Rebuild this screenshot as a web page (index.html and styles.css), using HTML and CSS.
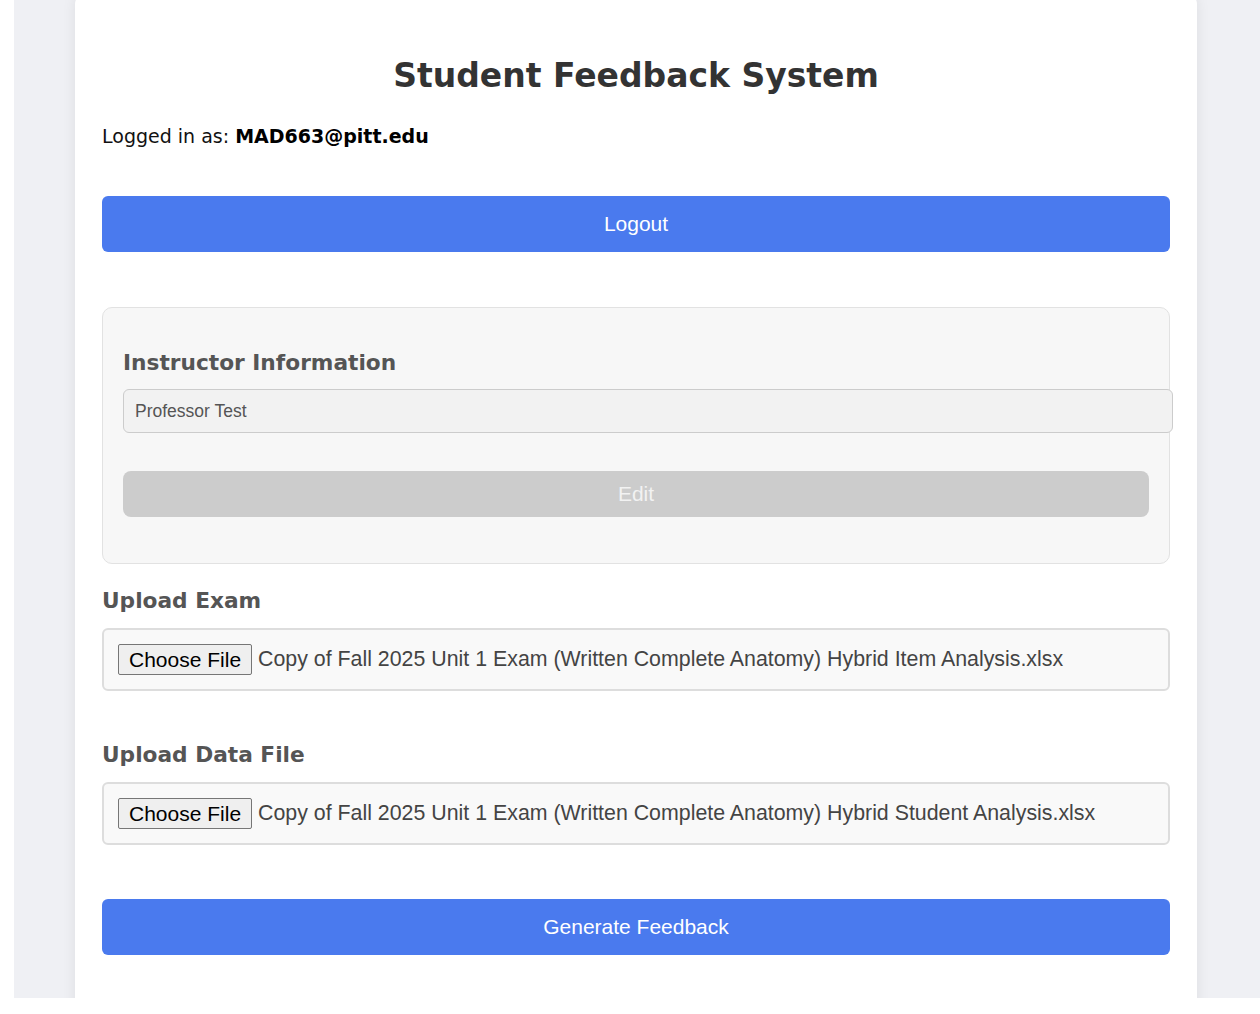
FILE: index.html
```html
<!DOCTYPE html>
<html lang="en">
<head>
  <meta charset="UTF-8">
  <title>Student Feedback System</title>
  <link rel="stylesheet" href="styles.css">
</head>
<body>
  <div class="page">
    <div class="card">
      <h1>Student Feedback System</h1>
      <p class="user">Logged in as: <strong>MAD663@pitt.edu</strong></p>

      <button class="btn-primary btn-logout">Logout</button>

      <div class="instructor-box">
        <h3>Instructor Information</h3>
        <input type="text" class="instructor-input" value="Professor Test" readonly>
        <button class="btn-edit" disabled>Edit</button>
      </div>

      <h3 class="upload-title">Upload Exam</h3>
      <div class="file-field">
        <span class="file-btn">Choose File</span>
        <span class="file-name">Copy of Fall 2025 Unit 1 Exam (Written Complete Anatomy) Hybrid Item Analysis.xlsx</span>
      </div>

      <h3 class="upload-title upload-data">Upload Data File</h3>
      <div class="file-field">
        <span class="file-btn">Choose File</span>
        <span class="file-name">Copy of Fall 2025 Unit 1 Exam (Written Complete Anatomy) Hybrid Student Analysis.xlsx</span>
      </div>

      <button class="btn-primary btn-generate">Generate Feedback</button>
    </div>
  </div>
</body>
</html>
```

FILE: styles.css
```css
body {
  margin: 0;
  background: #fff;
  font-family: "DejaVu Sans", Verdana, sans-serif;
}
.page {
  margin-left: 14px;
  padding-left: 61px;
  height: 998px;
  background: #eff0f4;
  overflow: hidden;
  display: flex;
  align-items: flex-start;
}
.card {
  width: 1122px;
  flex-shrink: 0;
  box-sizing: border-box;
  margin-top: -6px;
  padding: 0 27px 80px;
  background: #fff;
  border-radius: 10px;
  box-shadow: 0 0 14px rgba(0,0,0,0.08);
}
h1 {
  margin: 62px 0 0;
  font-size: 33px;
  line-height: 40px;
  text-align: center;
  color: #333;
}
.user {
  margin: 28px 0 0;
  font-size: 19px;
  line-height: 24px;
  color: #111;
}
.user strong {
  color: #000;
}
.btn-primary {
  display: block;
  width: 100%;
  height: 56px;
  border: none;
  border-radius: 6px;
  background: #4a7aee;
  color: #fff;
  font-family: "Liberation Sans", Arial, sans-serif;
  font-size: 21px;
  cursor: pointer;
}
.btn-logout {
  margin-top: 48px;
}
.instructor-box {
  margin-top: 55px;
  padding: 20px;
  background: #f7f7f7;
  border: 1px solid #e2e2e2;
  border-radius: 10px;
}
h3 {
  margin: 0;
  font-size: 21.7px;
  line-height: 26px;
  color: #555;
}
.instructor-box h3 {
  margin-top: 22px;
}
.instructor-input {
  display: block;
  width: 100%;
  height: 42px;
  margin-top: 13px;
  padding: 0 11px;
  border: 1px solid #ccc;
  border-radius: 6px;
  background: #f2f2f2;
  color: #555;
  font-family: "Liberation Sans", Arial, sans-serif;
  font-size: 17.5px;
  outline: none;
}
.btn-edit {
  display: block;
  width: 100%;
  height: 46px;
  margin: 38px 0 26px;
  border: none;
  border-radius: 8px;
  background: #ccc;
  color: #f2f2f2;
  font-family: "Liberation Sans", Arial, sans-serif;
  font-size: 21px;
}
.upload-title {
  margin-top: 24px;
}
.upload-data {
  margin-top: 51px;
}
.file-field {
  display: flex;
  align-items: center;
  gap: 6px;
  margin-top: 14px;
  padding: 14px;
  background: #f9f9f9;
  border: 2px solid #ddd;
  border-radius: 6px;
  font-family: "Liberation Sans", Arial, sans-serif;
  font-size: 21px;
}
.file-btn {
  display: inline-block;
  height: 29px;
  line-height: 29px;
  padding: 0 10px;
  background: #efefef;
  border: 1px solid #767676;
  border-radius: 2px;
  color: #000;
}
.file-name {
  color: #444;
  font-size: 21.35px;
  white-space: nowrap;
}
.btn-generate {
  margin-top: 54px;
}
```
